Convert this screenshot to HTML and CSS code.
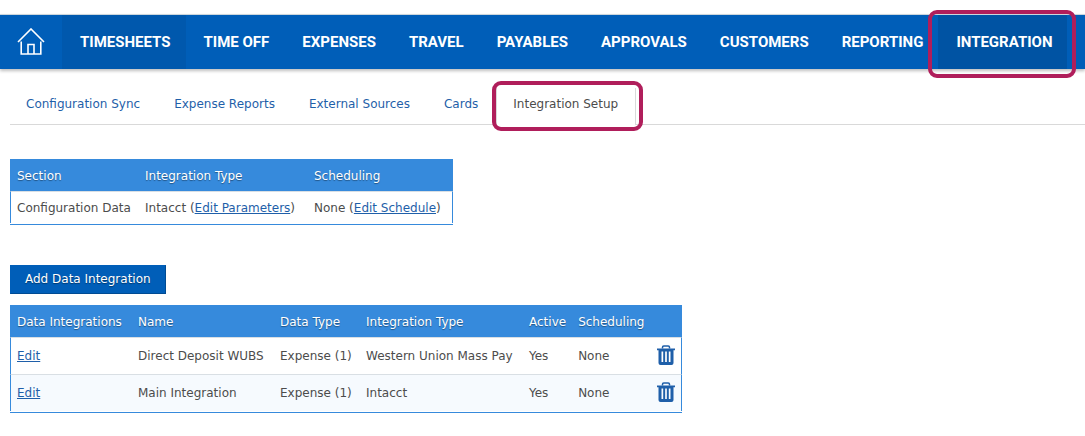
FILE: index.html
```html
<!DOCTYPE html>
<html lang="en">
<head>
<meta charset="utf-8">
<title>Integration Setup</title>
<link rel="stylesheet" href="styles.css">
</head>
<body>
<svg class="defs" aria-hidden="true">
  <symbol id="trash" viewBox="0 0 18 20">
    <path d="M5.500 3.500V2.300q0-1.300 1.300-1.300h4.400q1.300 0 1.300 1.300v1.200" fill="none" stroke="currentColor" stroke-width="1.500"/>
    <path fill="currentColor" fill-rule="evenodd" d="M0 3.500h18v1.700h-1.500V18q0 2-2 2h-11q-2 0-2-2V5.200H0zM4.500 6.500v10.500h1.700V6.500zM8.150 6.500v10.500h1.700V6.500zM11.800 6.500v10.500h1.700V6.500z"/>
  </symbol>
</svg>
<nav class="main-nav" aria-label="Main">
  <a class="home" href="#" aria-label="Home">
    <svg class="home-icon" viewBox="0 0 28 28" fill="none" stroke="currentColor" stroke-width="1.600">
      <path d="M1 14L14 1l13 13M4.200 13.500V26h19.600V13.500M11 26v-9.500h6V26"/>
    </svg>
  </a>
  <a class="nav-item hover" href="#">TIMESHEETS</a>
  <a class="nav-item" href="#">TIME OFF</a>
  <a class="nav-item" href="#">EXPENSES</a>
  <a class="nav-item" href="#">TRAVEL</a>
  <a class="nav-item" href="#">PAYABLES</a>
  <a class="nav-item" href="#">APPROVALS</a>
  <a class="nav-item" href="#">CUSTOMERS</a>
  <a class="nav-item" href="#">REPORTING</a>
  <a class="nav-item current" href="#" aria-current="page">INTEGRATION<span class="marker marker-nav"></span></a>
</nav>
<main class="content">
  <nav class="tabs" aria-label="Integration">
    <a class="tab" href="#">Configuration Sync</a>
    <a class="tab" href="#">Expense Reports</a>
    <a class="tab" href="#">External Sources</a>
    <a class="tab" href="#">Cards</a>
    <a class="tab selected" href="#" aria-current="page">Integration Setup<span class="marker marker-tab"></span></a>
  </nav>
  <table class="grid">
    <colgroup><col class="w-section"><col class="w-type"><col class="w-schedule"></colgroup>
    <thead>
      <tr><th>Section</th><th>Integration Type</th><th>Scheduling</th></tr>
    </thead>
    <tbody>
      <tr><td>Configuration Data</td><td>Intacct (<a href="#">Edit Parameters</a>)</td><td>None (<a href="#">Edit Schedule</a>)</td></tr>
    </tbody>
  </table>
  <button class="add" type="button">Add Data Integration</button>
  <table class="grid tall">
    <colgroup><col class="w-data"><col class="w-name"><col class="w-kind"><col class="w-system"><col class="w-active"><col class="w-timing"><col class="w-action"></colgroup>
    <thead>
      <tr><th>Data Integrations</th><th>Name</th><th>Data Type</th><th>Integration Type</th><th>Active</th><th>Scheduling</th><th></th></tr>
    </thead>
    <tbody>
      <tr>
        <td><a href="#">Edit</a></td><td>Direct Deposit WUBS</td><td>Expense (1)</td><td>Western Union Mass Pay</td><td>Yes</td><td>None</td>
        <td class="action"><button class="delete" type="button" aria-label="Delete Direct Deposit WUBS"><svg class="trash-icon"><use href="#trash"/></svg></button></td>
      </tr>
      <tr>
        <td><a href="#">Edit</a></td><td>Main Integration</td><td>Expense (1)</td><td>Intacct</td><td>Yes</td><td>None</td>
        <td class="action"><button class="delete" type="button" aria-label="Delete Main Integration"><svg class="trash-icon"><use href="#trash"/></svg></button></td>
      </tr>
    </tbody>
  </table>
</main>
</body>
</html>
```
FILE: styles.css
```css
body {
  margin: 0;
  padding-top: 14px;
  background: #fff;
  color: #4c4c4c;
  font: 12px/16px Verdana, "DejaVu Sans", sans-serif;
  white-space: nowrap;
}
.defs {
  display: none;
}
.main-nav {
  display: flex;
  height: 54px;
  border-top: 1px solid #ccd6dc;
  background: #005eb8;
  box-shadow: 0 2px 3px rgba(0, 0, 0, 0.25);
}
.home {
  display: flex;
  align-items: center;
  padding: 0 17px;
  color: #fff;
}
.home-icon {
  width: 28px;
  height: 28px;
}
.nav-item {
  position: relative;
  padding: 0 15px 0 18px;
  color: #fff;
  font: bold 15px/54px Roboto, sans-serif;
  text-decoration: none;
}
.nav-item.hover {
  background: #0058ad;
}
.nav-item.current {
  background: #0053a3;
}
.marker {
  position: absolute;
  border: 4px solid #b01e5b;
  border-radius: 9px;
  pointer-events: none;
}
.marker-nav {
  inset: -5px -9px -9px -10px;
}
.marker-tab {
  inset: -7px -8px -6px -5px;
}
.content {
  padding: 0 0 0 10px;
}
.tabs {
  display: flex;
  margin-top: 19px;
  border-bottom: 1px solid #d9d9d9;
}
.tab {
  position: relative;
  padding: 8px 17px 12px 16px;
  border-right: 1px solid transparent;
  color: #1f5fa9;
  text-decoration: none;
}
.tab.selected {
  margin: 0 0 -1px;
  border: 1px solid #d9d9d9;
  border-width: 0 1px;
  background: #fff;
  color: #4c4c4c;
}
.grid {
  margin-top: 34px;
  border-collapse: separate;
  border-spacing: 0;
  border-bottom: 1px solid #368adc;
  padding-bottom: 1px;
}
.w-section {
  width: 129px;
}
.w-type {
  width: 169px;
}
.w-schedule {
  width: 145px;
}
.w-data {
  width: 122px;
}
.w-name {
  width: 142px;
}
.w-kind {
  width: 86px;
}
.w-system {
  width: 163px;
}
.w-active {
  width: 49px;
}
.w-timing {
  width: 80px;
}
.w-action {
  width: 30px;
}
.grid th {
  padding: 9px 6px 7px;
  background: #368adc;
  color: #fff;
  font-weight: normal;
  text-align: left;
  text-shadow: 0 1px 1px rgba(0, 0, 0, 0.4);
}
.grid td {
  padding: 8px 6px 7px;
  border-top: 1px solid #d9dfe4;
}
.grid th:first-child,
.grid td:first-child {
  border-left: 1px solid #368adc;
}
.grid th:last-child,
.grid td:last-child {
  border-right: 1px solid #368adc;
}
.grid a {
  color: #1f5fa9;
  text-underline-offset: 1px;
}
.add {
  display: block;
  margin-top: 40px;
  padding: 5px 14px 6px;
  border: 1px solid #004b93;
  border-top-color: #005eb8;
  border-left-color: #005eb8;
  background: #005eb8;
  color: #fff;
  font: inherit;
  text-shadow: 0 1px 1px rgba(0, 0, 0, 0.4);
}
.grid.tall {
  margin-top: 11px;
}
.tall td {
  padding: 10px 6px;
}
.tall tbody tr:nth-child(even) {
  background: #f6fafe;
}
.tall .action {
  padding: 0 5px 2px;
}
.delete {
  display: block;
  padding: 0;
  border: 0;
  background: none;
  color: #1f5fa9;
}
.trash-icon {
  display: block;
  width: 18px;
  height: 20px;
}
```
